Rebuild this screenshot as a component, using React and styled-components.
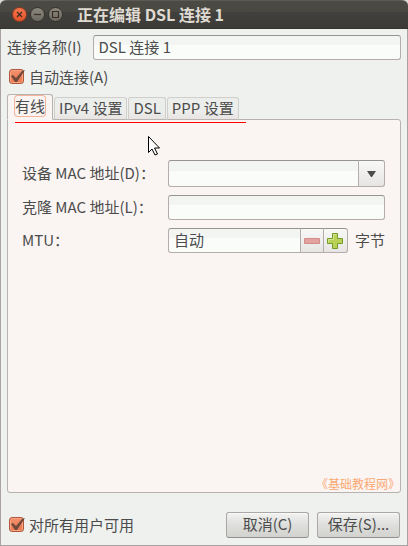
import React, { useState } from "react";
import styled, { createGlobalStyle, css } from "styled-components";

const GlobalStyle = createGlobalStyle`
  * { box-sizing: border-box; }
  body { margin: 0; background: #d9d9d6; }
  body, input, button {
    font-family: "Noto Sans CJK SC", "Noto Sans", sans-serif;
    font-size: 15px;
    line-height: 20px;
    color: #4c4c4c;
  }
`;

const Window = styled.main`
  display: flex;
  flex-direction: column;
  min-height: 100vh;
  background: #eff1ef;
  border: 1px solid #aaa2a3;
  border-top: 0;
  border-radius: 6px 6px 0 0;
`;

const TitleBar = styled.header`
  display: flex;
  align-items: center;
  gap: 3px;
  height: 29px;
  margin: 0 -1px;
  padding: 0 12px;
  border-top: 1px solid #5d5b56;
  border-bottom: 1px solid #353431;
  border-radius: 6px 6px 0 0;
  background: linear-gradient(#4c4b43, #4a4941 38%, #42403c 42%, #3c3b37);
`;

const WindowButton = styled.button`
  display: flex;
  width: 15px;
  height: 15px;
  padding: 0;
  border: 1px solid ${(p) => (p.$close ? "#8d3a20" : "#35342f")};
  border-radius: 50%;
  background: ${(p) => (p.$close ? "linear-gradient(#f4764c, #e5532a)" : "linear-gradient(#8a877c, #6c6a62)")};
`;

const Title = styled.h1`
  margin: 0 0 2px 11px;
  font-size: 16px;
  font-weight: 700;
  color: #dfdbd2;
`;

const Content = styled.form`
  flex: 1;
  display: flex;
  flex-direction: column;
  padding: 6px 6px 7px;
`;

const NameRow = styled.div`
  display: flex;
  align-items: center;
  gap: 11px;
`;

const frame = css`
  border: 1px solid #b5adad;
  border-top-color: #979393;
  border-radius: 3px;
  background: linear-gradient(#f3f5f3 40%, #f9fcf9 40%);
`;

const TextInput = styled.input`
  ${frame}
  flex: 1;
  width: 100%;
  min-width: 0;
  height: 25px;
  padding: 0 5px 2px;
  outline: 0;
`;

const FieldLabel = styled.label`
  padding-bottom: 2px;
`;

const CheckLabel = styled.label`
  display: flex;
  align-items: center;
  gap: 3px;
`;

const CheckArea = styled.span`
  display: grid;
  width: 17px;
  height: 16px;
  > * { grid-area: 1 / 1; }
  svg { pointer-events: none; visibility: hidden; }
  input:checked + svg { visibility: visible; }
`;

const CheckBox = styled.input`
  appearance: none;
  width: 15px;
  height: 15px;
  margin: 0;
  border: 1px solid #b0583a;
  border-radius: 3px;
  background: linear-gradient(#f3906b, #ec7850);
  box-shadow: inset 0 0 0 1px #f7a483;
`;

const AutoRow = styled.div`
  padding: 7px 2px;
`;

const TabBar = styled.div`
  display: flex;
  align-items: flex-end;
  gap: 1px;
  position: relative;
  z-index: 1;
`;

const Tab = styled.button`
  height: 23px;
  padding: 0 4px 2px;
  border: 1px solid #d0cfcc;
  border-bottom-color: #b8b3b1;
  border-radius: 3px 3px 0 0;
  background: linear-gradient(#eceeeb 60%, #e8e4e2);
  ${(p) =>
    p.$active &&
    css`
      height: 26px;
      padding: 0 7px 2px;
      border-color: #b8b3b1;
      border-bottom-color: #faf5f2;
      background: #faf5f2;
    `}
`;

const TabText = styled.span`
  display: block;
  border-radius: 3px;
  ${(p) => p.$active && css`box-shadow: 0 0 0 1px #f3b49b;`}
`;

const Panel = styled.section`
  flex: 1;
  display: flex;
  flex-direction: column;
  margin-top: -1px;
  padding: 2px 0 0 7px;
  border: 1px solid #b8b3b1;
  border-radius: 0 3px 3px 3px;
  background: #faf5f2;
`;

const RedLine = styled.div`
  flex: none;
  width: 60%;
  height: 1px;
  background-color: #ff0000;
`;

const Fields = styled.div`
  display: grid;
  grid-template-columns: 146px 1fr;
  align-items: center;
  row-gap: 8px;
  padding: 37px 15px 0 7px;
`;

const ComboBox = styled.div`
  display: flex;
  height: 27px;
  ${TextInput} { height: 27px; border-radius: 3px 0 0 3px; }
`;

const StepButton = styled.button`
  display: flex;
  align-items: center;
  justify-content: center;
  flex: none;
  width: ${(p) => p.$width || 24}px;
  margin-left: -1px;
  padding: 0;
  border: 1px solid #b5adad;
  border-top-color: #979393;
  border-radius: ${(p) => (p.$last ? "0 3px 3px 0" : "0")};
  background: linear-gradient(#f8f8f7, #e6e5e3);
`;

const MtuRow = styled.div`
  display: flex;
  align-items: center;
  gap: 7px;
`;

const Spinner = styled.div`
  flex: 1;
  display: flex;
  ${TextInput} { border-radius: 3px 0 0 3px; }
`;

const Unit = styled.span`
  padding-bottom: 2px;
`;

const Credit = styled.p`
  margin: auto 0 0;
  font-size: 12px;
  line-height: 16px;
  text-align: right;
  color: #faa873;
`;

const Footer = styled.footer`
  display: flex;
  align-items: center;
  gap: 8px;
  padding: 19px 1px 0 2px;
  ${CheckLabel} { margin-right: auto; }
`;

const ActionButton = styled.button`
  width: 83px;
  height: 26px;
  padding: 0 0 2px;
  border: 1px solid #aaa7a5;
  border-bottom-color: #918e8c;
  border-radius: 3px;
  background: linear-gradient(#f2f3f1, #dedfdc 50%, #d2d3cf);
  box-shadow: inset 0 1px #fafafa;
`;

const Pointer = styled.svg`
  position: absolute;
  left: 148px;
  top: 136px;
  z-index: 2;
  pointer-events: none;
`;

function Check({ children }) {
  return (
    <CheckLabel>
      <CheckArea>
        <CheckBox type="checkbox" defaultChecked />
        <svg width="17" height="16" viewBox="0 0 17 16" aria-hidden="true">
          <path d="M2 7l2-1 3 3 6-7 3-1-8 12H6z" fill="#704a3b" />
        </svg>
      </CheckArea>
      <span>{children}</span>
    </CheckLabel>
  );
}

const glyphs = {
  close: "M4 4l5 5M9 4l-5 5",
  minimize: "M3 6.5h7",
  maximize: "M3.5 3.5h6v6h-6z",
};

function TitleButton({ kind, label }) {
  return (
    <WindowButton type="button" $close={kind === "close"} aria-label={label}>
      <svg width="13" height="13" viewBox="0 0 13 13" aria-hidden="true">
        <path d={glyphs[kind]} fill="none" stroke="#3b2d26" strokeWidth="1.2" />
      </svg>
    </WindowButton>
  );
}

const tabs = ["有线", "IPv4 设置", "DSL", "PPP 设置"];

export default function App() {
  const [active, setActive] = useState(0);
  return (
    <Window>
      <GlobalStyle />
      <TitleBar>
        <TitleButton kind="close" label="关闭" />
        <TitleButton kind="minimize" label="最小化" />
        <TitleButton kind="maximize" label="最大化" />
        <Title>正在编辑 DSL 连接 1</Title>
      </TitleBar>
      <Content onSubmit={(e) => e.preventDefault()}>
        <NameRow>
          <FieldLabel htmlFor="name">连接名称(I)</FieldLabel>
          <TextInput id="name" defaultValue="DSL 连接 1" />
        </NameRow>
        <AutoRow>
          <Check>自动连接(A)</Check>
        </AutoRow>
        <TabBar role="tablist">
          {tabs.map((name, i) => (
            <Tab key={name} type="button" role="tab" aria-selected={i === active} $active={i === active} onClick={() => setActive(i)}>
              <TabText $active={i === active}>{name}</TabText>
            </Tab>
          ))}
        </TabBar>
        <Panel role="tabpanel">
          <RedLine />
          <Fields>
            <FieldLabel htmlFor="device">设备 MAC 地址(D)：</FieldLabel>
            <ComboBox>
              <TextInput id="device" />
              <StepButton type="button" $last $width={27} aria-label="选择设备">
                <svg width="9" height="6" viewBox="0 0 9 6" aria-hidden="true">
                  <path d="M0 0h9L5 6H4z" fill="#4c4c4c" />
                </svg>
              </StepButton>
            </ComboBox>
            <FieldLabel htmlFor="clone">克隆 MAC 地址(L)：</FieldLabel>
            <TextInput id="clone" />
            <FieldLabel htmlFor="mtu">MTU：</FieldLabel>
            <MtuRow>
              <Spinner>
                <TextInput id="mtu" defaultValue="自动" />
                <StepButton type="button" aria-label="减少">
                  <svg width="16" height="6" viewBox="0 0 16 6" aria-hidden="true">
                    <path d="M.5.5h15v5H.5z" fill="#e3a29f" stroke="#d08c89" />
                  </svg>
                </StepButton>
                <StepButton type="button" $last $width={25} aria-label="增加">
                  <svg width="16" height="16" viewBox="0 0 16 16" aria-hidden="true">
                    <path d="M5.5.5h5v5h5v5h-5v5h-5v-5h-5v-5h5z" fill="#b9d154" stroke="#739b2b" />
                    <path d="M6.5 6.5v-5h3M1.5 9.500v-3h5" fill="none" stroke="#d4e68c" />
                  </svg>
                </StepButton>
              </Spinner>
              <Unit>字节</Unit>
            </MtuRow>
          </Fields>
          <Credit>《基础教程网》</Credit>
        </Panel>
        <Footer>
          <Check>对所有用户可用</Check>
          <ActionButton type="button">取消(C)</ActionButton>
          <ActionButton type="submit">保存(S)...</ActionButton>
        </Footer>
      </Content>
      <Pointer width="13" height="20" viewBox="0 0 13 20" aria-hidden="true">
        <path d="M.5.5v16l3.500-3.500 3 6 2.500-1-3-6h5z" fill="#fff" stroke="#000" />
      </Pointer>
    </Window>
  );
}
